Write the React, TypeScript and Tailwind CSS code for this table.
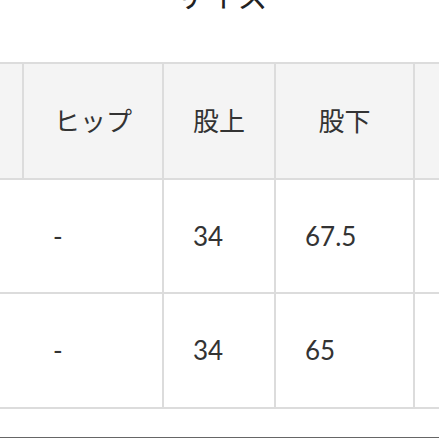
const font = "font-['Lato','Noto_Sans_CJK_JP',sans-serif]";

const headers = ["", "ヒップ", "股上", "股下", ""];

const rows = [
  ["", "-", "34", "67.5", ""],
  ["", "-", "34", "65", ""],
];

const cols = "grid grid-cols-[22px_138px_110px_137px_1fr] gap-x-[2px]";

export default function App() {
  return (
    <div className={`h-[439px] w-[439px] overflow-hidden bg-white text-[#333] ${font}`}>
      <div className="mt-[-20px] h-[30px] pl-[6px] text-center text-[30px] leading-[30px] tracking-[2px] text-[#222]">
        サイズ
      </div>

      <div className="mt-[52px] flex flex-col gap-y-[2px] bg-[#dcdcdc] py-[2px]">
        <div className={`${cols} h-[114px]`}>
          {headers.map((h, i) => (
            <div
              className="flex items-center justify-center bg-[#f4f4f4] text-[26px]"
              key={i}
            >
              {h}
            </div>
          ))}
        </div>
        {rows.map((row, r) => (
          <div className={`${cols} ${r === 0 ? "h-[112px]" : "h-[113px]"}`} key={r}>
            {row.map((c, i) => (
              <div className="flex items-center bg-white pl-[29px] text-[26px]" key={i}>
                {c}
              </div>
            ))}
          </div>
        ))}
      </div>

      <div className="mt-[28px] h-[1px] bg-[#666]" />
    </div>
  );
}
